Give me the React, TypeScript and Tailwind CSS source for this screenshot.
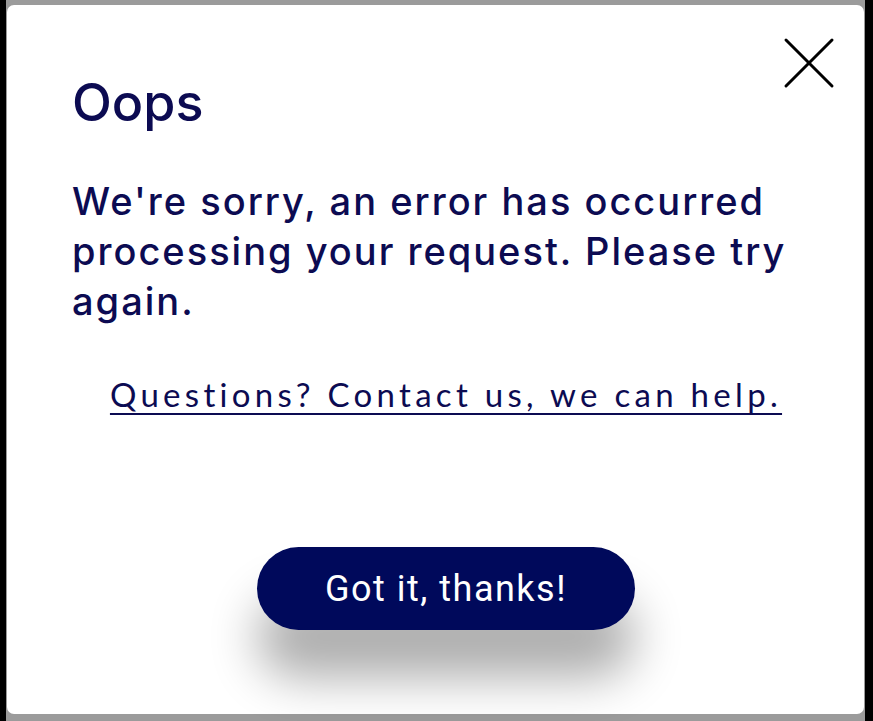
import React from 'react';

const CloseIcon: React.FC = () => (
  <svg width="52" height="52" viewBox="0 0 52 52" fill="none" stroke="#000" strokeWidth="3" strokeLinecap="round">
    <path d="M3 3 L49 49" />
    <path d="M49 3 L3 49" />
  </svg>
);

const App: React.FC = () => {
  return (
    <div className="w-[873px] h-[721px] bg-black pl-[6px] pr-[8px] overflow-hidden">
      <div className="h-full bg-[#9b9b9b] pt-[5px] pb-[7px] px-[1px]">
        {/* Card */}
        <div className="relative h-full bg-white rounded-[7px] pl-[65px] pr-[44px] flex flex-col">
          <button className="absolute top-[32px] right-[29px]">
            <CloseIcon />
          </button>

          {/* Title */}
          <h1 className="mt-[66px] font-['Inter',sans-serif] font-medium text-[52px] leading-[64px] text-[#0c0b52]">
            Oops
          </h1>

          {/* Message */}
          <p className="mt-[41px] font-['Inter',sans-serif] font-medium text-[38px] leading-[50px] tracking-[2px] text-[#0c0b52]">
            We're sorry, an error has occurred processing your request. Please try again.
          </p>

          {/* Link */}
          <div className="mt-[48px] text-center text-[33px] leading-[40px]">
            <a href="#" className="font-['Lato',sans-serif] font-normal tracking-[4.3px] text-[#0c0b52] underline underline-offset-[6px] decoration-[2px]">
              Questions? Contact us, we can help.
            </a>
          </div>

          {/* Button */}
          <div className="mt-[132px] flex justify-center">
            <button className="w-[378px] h-[83px] rounded-full bg-[#00095b] text-white font-['Roboto',sans-serif] text-[36px] tracking-[1.5px] shadow-[0_48px_48px_rgba(0,0,0,0.32)]">
              Got it, thanks!
            </button>
          </div>
        </div>
      </div>
    </div>
  );
};

export default App;
